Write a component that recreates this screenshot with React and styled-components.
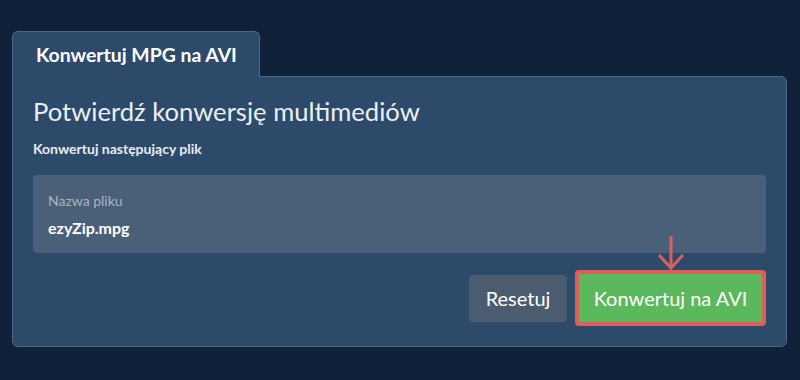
import React from 'react'
import styled, { createGlobalStyle } from 'styled-components'

const GlobalStyle = createGlobalStyle`
  html, body {
    margin: 0;
    padding: 0;
    background: #10223a;
    font-family: Lato, "Open Sans", sans-serif;
  }
`

function App() {
    return (
        <>
            <GlobalStyle />
            <Page>
                <Tab>Konwertuj MPG na AVI</Tab>
                <Panel>
                    <Title>Potwierdź konwersję multimediów</Title>
                    <Subtitle>Konwertuj następujący plik</Subtitle>
                    <FileBox>
                        <FileLabel>Nazwa pliku</FileLabel>
                        <FileName>ezyZip.mpg</FileName>
                    </FileBox>
                    <Actions>
                        <Button>Resetuj</Button>
                        <Highlight>
                            <Arrow width="30" height="36" viewBox="0 0 30 36">
                                <path d="M15 1 V33 M3 20 L15 33 L27 20" fill="none" stroke="#dc5f5a" strokeWidth="3" />
                            </Arrow>
                            <Button primary>Konwertuj na AVI</Button>
                        </Highlight>
                    </Actions>
                </Panel>
            </Page>
        </>
    )
}

export default App

const Page = styled.div`
    padding: 31px 13px 0 12px;
    display: flex;
    flex-direction: column;
    align-items: flex-start;
`
const Tab = styled.div`
    position: relative;
    z-index: 1;
    width: 248px;
    height: 46px;
    box-sizing: border-box;
    margin-bottom: -1px;
    padding: 0 0 0 23px;
    display: flex;
    align-items: center;
    background: #2d4a6b;
    border: 1px solid #4d6789;
    border-bottom: none;
    border-radius: 6px 6px 0 0;
    color: #fff;
    font-size: 19.4px;
    font-weight: 700;
`
const Panel = styled.div`
    align-self: stretch;
    box-sizing: border-box;
    background: #2d4a6b;
    border: 1px solid #4d6789;
    border-radius: 0 6px 6px 6px;
    padding: 19px 20px 20px 20px;
`
const Title = styled.h1`
    margin: 0;
    font-size: 25.6px;
    line-height: 31px;
    font-weight: 400;
    color: #ecf0f4;
`
const Subtitle = styled.div`
    margin-top: 13px;
    font-size: 14px;
    line-height: 17px;
    font-weight: 700;
    color: #e8edf2;
`
const FileBox = styled.div`
    margin-top: 18px;
    height: 78px;
    box-sizing: border-box;
    padding: 17px 15px 0;
    background: #4a6079;
    border-radius: 4px;
`
const FileLabel = styled.div`
    font-size: 14px;
    line-height: 17px;
    color: #a9b5c3;
`
const FileName = styled.div`
    margin-top: 9px;
    font-size: 16px;
    line-height: 20px;
    font-weight: 700;
    color: #fff;
`
const Actions = styled.div`
    margin-top: 17px;
    display: flex;
    justify-content: flex-end;
    align-items: center;
    gap: 8px;
`
const Highlight = styled.div`
    position: relative;
    display: flex;
    border: 4px solid #dc5f5a;
    border-radius: 4px;
`
const Arrow = styled.svg`
    position: absolute;
    top: -39px;
    left: 50%;
    margin-left: -15px;
`
const Button = styled.button`
    height: ${p => (p.primary ? '48px' : '47px')};
    padding: 0;
    width: ${p => (p.primary ? '183px' : '98px')};
    border: none;
    border-radius: ${p => (p.primary ? '0' : '4px')};
    background: ${p => (p.primary ? '#5cb85c' : '#4b5c70')};
    color: #fff;
    font-family: Lato, "Open Sans", sans-serif;
    font-size: 20px;
    cursor: pointer;
`
